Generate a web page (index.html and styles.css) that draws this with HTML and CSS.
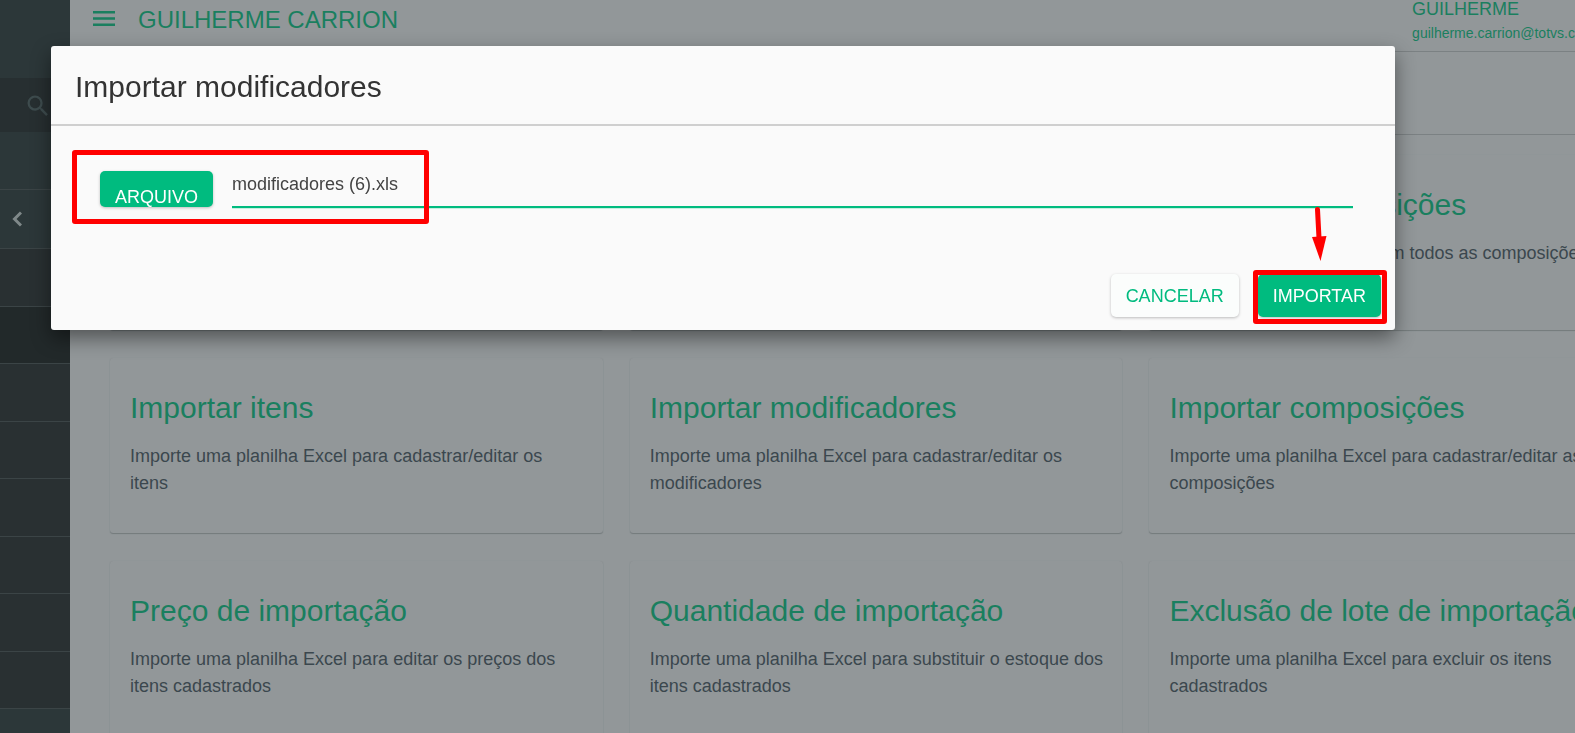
FILE: index.html
```html
<!DOCTYPE html>
<html lang="pt-BR">
<head>
  <meta charset="UTF-8" />
  <title>Importar modificadores</title>
  <meta name="viewport" content="width=device-width, initial-scale=1.0" />
  <link rel="stylesheet" href="styles.css">
</head>
<body>
  <div class="app">
    <nav class="sidebar">
      <div class="side-brand"></div>
      <div class="side-search">
        <svg width="28" height="28" viewBox="0 0 24 24" fill="currentColor"><path d="M15.5 14h-.79l-.28-.27A6.47 6.47 0 0 0 16 9.500 6.500 6.500 0 1 0 9.500 16c1.610 0 3.090-.59 4.230-1.570l.27.28v.79l5 4.990L20.490 19l-4.990-5zm-6 0C7.010 14 5 11.990 5 9.500S7.010 5 9.500 5 14 7.010 14 9.500 11.990 14 9.500 14z"/></svg>
      </div>
      <div class="side-item"></div>
      <div class="side-item side-back">
        <svg width="10" height="16" viewBox="0 0 10 16" fill="none" stroke="currentColor" stroke-width="3"><path d="M9 1.500 2.500 8 9 14.500"/></svg>
      </div>
      <div class="side-item sub"></div>
      <div class="side-item sub active"></div>
      <div class="side-item sub"></div>
      <div class="side-item sub"></div>
      <div class="side-item sub"></div>
      <div class="side-item sub"></div>
      <div class="side-item sub"></div>
      <div class="side-item sub"></div>
      <div class="side-item"></div>
    </nav>
    <div class="main">
      <header class="topbar">
        <button class="menu-btn" aria-label="Menu">
          <svg width="22" height="16" viewBox="0 0 22 16" fill="currentColor"><path d="M0 0h22v2.500H0zM0 6.200h22v2.500H0zM0 12.400h22v2.500H0z"/></svg>
        </button>
        <span class="company">GUILHERME CARRION</span>
        <div class="user">
          <span class="user-name">GUILHERME</span>
          <span class="user-mail">guilherme.carrion@totvs.com.br</span>
        </div>
      </header>
      <div class="subbar"></div>
      <section class="cards">
        <article class="card"><h2>Exportar itens</h2><p>Gere uma planilha Excel com todos os itens</p></article>
        <article class="card"><h2>Exportar modificadores</h2><p>Gere uma planilha Excel com todos os modificadores</p></article>
        <article class="card"><h2>Exportar composições</h2><p>Gere uma planilha Excel com todos as composições</p></article>
        <article class="card"><h2>Importar itens</h2><p>Importe uma planilha Excel para cadastrar/editar os itens</p></article>
        <article class="card"><h2>Importar modificadores</h2><p>Importe uma planilha Excel para cadastrar/editar os modificadores</p></article>
        <article class="card"><h2>Importar composições</h2><p>Importe uma planilha Excel para cadastrar/editar as composições</p></article>
        <article class="card"><h2>Preço de importação</h2><p>Importe uma planilha Excel para editar os preços dos itens cadastrados</p></article>
        <article class="card"><h2>Quantidade de importação</h2><p>Importe uma planilha Excel para substituir o estoque dos itens cadastrados</p></article>
        <article class="card"><h2>Exclusão de lote de importação</h2><p>Importe uma planilha Excel para excluir os itens cadastrados</p></article>
      </section>
    </div>
  </div>

  <div class="overlay">
    <form class="modal" role="dialog" aria-labelledby="modalTitle">
      <h1 class="modal-title" id="modalTitle">Importar modificadores</h1>
      <div class="file-row">
        <button type="button" class="btn file-btn">ARQUIVO</button>
        <input class="file-path" type="text" value="modificadores (6).xls" aria-label="Arquivo">
        <span class="mark mark-file"></span>
      </div>
      <div class="modal-footer">
        <button type="button" class="btn btn-flat">CANCELAR</button>
        <div class="submit">
          <button type="button" class="btn">IMPORTAR</button>
          <span class="mark mark-submit"></span>
          <svg class="arrow" width="16" height="56" viewBox="0 0 16 56"><path d="M6.500 3.500 8 32" stroke="#f00" stroke-width="5" stroke-linecap="round"/><path d="M1 31 15.500 30 9.500 55z" fill="#f00"/></svg>
        </div>
      </div>
    </form>
  </div>
</body>
</html>
```
FILE: styles.css
```css
:root {
  --green: #00bb7f;
  --green-dim: #1a7f5f;
  --page: #929799;
  --line: #7b8183;
}
* {
  box-sizing: border-box;
}
body {
  margin: 0;
  height: 100vh;
  overflow: hidden;
  font-family: "Liberation Sans", Arial, sans-serif;
  background: var(--page);
}
h1, h2, p {
  margin: 0;
  font-weight: 400;
}

/* page behind the dialog, wider than the window */
.app {
  display: flex;
  width: 106.8vw;
}
.sidebar {
  flex: 0 0 70px;
  background: #2c3739;
}
.side-brand {
  height: 78px;
}
.side-search {
  height: 54px;
  padding: 14px 0 0 24px;
  background: #272f31;
  color: #3e4c4e;
}
.side-item {
  height: 58px;
  border-bottom: 1px solid #3b4446;
}
.side-item.side-back {
  height: 59px;
  padding: 21px 0 0 12px;
  color: #7f8889;
}
.side-item.sub {
  background: #293032;
}
.side-item.sub:nth-child(even) {
  height: 57px;
}
.side-item.active {
  background: #22292a;
}

.main {
  flex: 1;
  min-width: 0;
}
.topbar {
  display: flex;
  height: 52px;
  padding-left: 23px;
  border-bottom: 1px solid var(--line);
  color: var(--green-dim);
}
.menu-btn {
  align-self: flex-start;
  margin-top: 11px;
  padding: 0;
  border: none;
  background: none;
  color: inherit;
}
.menu-btn svg {
  display: block;
}
.company {
  margin-left: 23px;
  font-size: 24px;
  line-height: 40px;
}
.user {
  display: flex;
  flex-direction: column;
  width: 270px;
  margin-left: auto;
}
.user-name {
  font-size: 18px;
  line-height: 18px;
}
.user-mail {
  margin-top: 7px;
  font-size: 14px;
  line-height: 16px;
}
.subbar {
  height: 83px;
  border-bottom: 1px solid var(--line);
}
.cards {
  display: grid;
  grid-template-columns: repeat(3, 1fr);
  grid-auto-rows: 175px;
  gap: 28px 27px;
  padding: 20px 40px;
}
.card {
  padding: 32px 18px 32px 20px;
  border-radius: 3px;
  box-shadow: 0 1px 1px #747a7c, 0 0 1px #868b8d;
}
.card h2 {
  color: var(--green-dim);
  font-size: 30px;
  line-height: 36px;
  white-space: nowrap;
}
.card p {
  margin-top: 17px;
  color: #3b474e;
  font-size: 18px;
  line-height: 27px;
}

.overlay {
  position: fixed;
  inset: 0;
  padding: 46px 180px 0 51px;
}
.modal {
  border-radius: 3px;
  background: #fafafa;
  box-shadow: 0 8px 20px rgba(0, 0, 0, 0.45);
}
.modal-title {
  padding: 23px 24px 19px;
  border-bottom: 2px solid #cfcfcf;
  color: #333;
  font-size: 30px;
  line-height: 36px;
}
.file-row {
  position: relative;
  display: flex;
  gap: 19px;
  margin: 45px 42px 0 49px;
}
.btn {
  height: 43px;
  padding: 2px 15px 0;
  border: none;
  border-radius: 5px;
  background: var(--green);
  color: #fff;
  font-family: inherit;
  font-size: 18px;
  box-shadow: 0 1px 3px rgba(0, 0, 0, 0.25);
}
/* label sits low in the short file button */
.file-btn {
  height: 36px;
  padding-top: 16px;
  line-height: 20px;
}
.file-path {
  flex: 1;
  min-width: 0;
  height: 37px;
  padding: 0 0 9px;
  border: none;
  border-bottom: 2px solid var(--green);
  background: none;
  box-shadow: 0 1px 0 #c5efe0;
  color: #444;
  font-family: inherit;
  font-size: 18px;
}
.modal-footer {
  display: flex;
  justify-content: flex-end;
  gap: 19px;
  padding: 66px 14px 13px;
}
.btn-flat {
  background: #fbfdfc;
  color: var(--green);
}
.submit {
  position: relative;
}

.mark {
  position: absolute;
  border: 5px solid #f00;
  border-radius: 3px;
  pointer-events: none;
}
.mark-file {
  top: -21px;
  left: -28px;
  width: 357px;
  height: 74px;
}
.mark-submit {
  inset: -4px -6px -7px -5px;
}
.arrow {
  position: absolute;
  right: 54px;
  bottom: 55px;
}
```
